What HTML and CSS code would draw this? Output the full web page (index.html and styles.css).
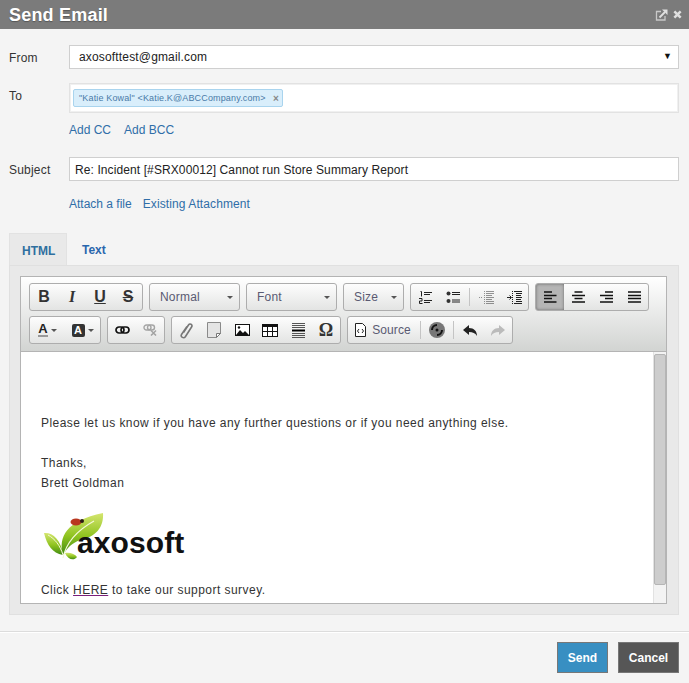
FILE: index.html
```html
<!DOCTYPE html>
<html lang="en">
<head>
<meta charset="utf-8">
<title>Send Email</title>
<link rel="stylesheet" href="styles.css">
</head>
<body>
<svg class="defs" width="0" height="0" aria-hidden="true">
  <defs>
    <linearGradient id="leaf" x1="0" y1="0" x2="0" y2="1">
      <stop offset="0" stop-color="#d5e670"/>
      <stop offset="0.55" stop-color="#8fc31f"/>
      <stop offset="1" stop-color="#3f8a12"/>
    </linearGradient>
  </defs>
</svg>
<div class="dialog">
  <header class="titlebar">
    <h1 class="title">Send Email</h1>
    <div class="title-icons">
      <svg width="13" height="12" viewBox="0 0 13 12"><path d="M6 2.500H1.500v8.500h8.500V7" fill="none" stroke="#c9c9c9" stroke-width="1.300"/><path d="M4.500 8.500 10 3" stroke="#e0e0e0" stroke-width="1.800"/><path d="M7 .5h5.500V6z" fill="#e0e0e0"/></svg>
      <svg width="9" height="9" viewBox="0 0 10 10"><path d="M1.500 1.500l7 7M8.500 1.500l-7 7" stroke="#e0e0e0" stroke-width="2.800"/></svg>
    </div>
  </header>

  <main class="form">
    <div class="row row-from">
      <label class="label label-low">From</label>
      <div class="field field-select"><span>axosofttest@gmail.com</span><span class="caret">▼</span></div>
    </div>
    <div class="row row-to">
      <label class="label label-low">To</label>
      <div class="field-to"><span class="chip"><span>"Katie Kowal" &lt;Katie.K@ABCCompany.com&gt;</span><span class="chip-x">×</span></span></div>
    </div>
    <div class="row row-links-a">
      <span></span>
      <div class="links"><a class="link">Add CC</a><a class="link">Add BCC</a></div>
    </div>
    <div class="row row-subject">
      <label class="label label-low">Subject</label>
      <div class="field field-subject">Re: Incident [#SRX00012] Cannot run Store Summary Report</div>
    </div>
    <div class="row row-links-b">
      <span></span>
      <div class="links"><a class="link">Attach a file</a><a class="link">Existing Attachment</a></div>
    </div>

    <div class="tabs">
      <div class="tab tab-active">HTML</div>
      <div class="tab">Text</div>
    </div>
    <section class="panel">
      <div class="editor">
        <div class="toolbar">
          <div class="tb-row">
            <div class="group">
              <button class="btn glyph g-b">B</button>
              <button class="btn glyph g-i">I</button>
              <button class="btn glyph g-u">U</button>
              <button class="btn glyph g-s">S</button>
            </div>
            <div class="group combo combo-wide"><span>Normal</span><i class="tri"></i></div>
            <div class="group combo combo-wide"><span>Font</span><i class="tri"></i></div>
            <div class="group combo combo-size"><span>Size</span><i class="tri"></i></div>
            <div class="group">
              <button class="btn"><svg width="13" height="13" viewBox="0 0 13 13"><path d="M5 1.500h8M5 3.500h6M5 9.500h8M5 11.500h6" stroke="#222"/><path d="M1.500 .5h1v5M0 7.500h3v2.500H.5v2.500H3.500" fill="none" stroke="#222"/></svg></button>
              <button class="btn"><svg width="14" height="13" viewBox="0 0 14 13"><circle cx="2.500" cy="2.500" r="2" fill="#333"/><circle cx="2.500" cy="10" r="2" fill="#333"/><path d="M6 1.500h8M6 3.500h8M6 9h8M6 11h8" stroke="#222"/></svg></button>
              <i class="sep"></i>
              <button class="btn"><svg width="15" height="13" viewBox="0 0 15 13" opacity=".5"><path d="M7 .5h8M7 2.500h8M7 4.500h6M7 6.500h8M7 8.500h6M7 10.500h8M7 12.500h8" stroke="#333"/><path d="M5.500 0v13" stroke="#333" stroke-dasharray="1 1"/><path d="M0 6.500h4" stroke="#333" stroke-dasharray="1 1"/></svg></button>
              <button class="btn"><svg width="15" height="13" viewBox="0 0 15 13"><path d="M7 .5h8M9 2.500h6M9 4.500h5M9 6.500h6M9 8.500h5M9 10.500h6M7 12.500h8" stroke="#222"/><path d="M5.500 0v13" stroke="#222" stroke-dasharray="1 1"/><path d="M0 6.500h4M2.500 4.500l2 2-2 2" fill="none" stroke="#222"/></svg></button>
            </div>
            <div class="group">
              <button class="btn btn-on"><svg width="13" height="12" viewBox="0 0 13 12"><path d="M0 1h8M0 4.500h12.500M0 7.500h8M0 11h12.500" stroke="#111" stroke-width="1.500"/></svg></button>
              <button class="btn"><svg width="13" height="12" viewBox="0 0 13 12"><path d="M2.500 1h8M0 4.500h13M2.500 7.500h8M0 11h13" stroke="#111" stroke-width="1.500"/></svg></button>
              <button class="btn"><svg width="13" height="12" viewBox="0 0 13 12"><path d="M5 1h8M0 4.500h13M5 7.500h8M0 11h13" stroke="#111" stroke-width="1.500"/></svg></button>
              <button class="btn"><svg width="13" height="12" viewBox="0 0 13 12"><path d="M0 1h13M0 4.500h13M0 7.500h13M0 11h13" stroke="#111" stroke-width="1.500"/></svg></button>
            </div>
          </div>
          <div class="tb-row">
            <div class="group">
              <button class="btn btn-color"><span class="color-a">A</span><i class="tri tri-small"></i></button>
              <button class="btn btn-color"><span class="color-box">A</span><i class="tri tri-small"></i></button>
            </div>
            <div class="group">
              <button class="btn"><svg width="15" height="8" viewBox="0 0 15 8"><rect x="1" y="1" width="8" height="6" rx="3" fill="none" stroke="#111" stroke-width="1.700"/><rect x="6" y="1" width="8" height="6" rx="3" fill="none" stroke="#111" stroke-width="1.700"/></svg></button>
              <button class="btn"><svg width="14" height="12" viewBox="0 0 14 12" opacity=".4"><rect x="1" y="1" width="7" height="5" rx="2.500" fill="none" stroke="#333" stroke-width="1.400"/><rect x="4.500" y="1" width="7" height="5" rx="2.500" fill="none" stroke="#333" stroke-width="1.400"/><path d="M8 6.500l5 5M13 6.500l-5 5" stroke="#333" stroke-width="1.500"/></svg></button>
            </div>
            <div class="group">
              <button class="btn"><svg width="13" height="17" viewBox="0 0 13 17"><path d="M3.500 10.500 8.500 3c1.300-2 4.300-.5 3.200 1.800L5.500 14.500c-1.700 2.500-5.300.5-4-2L7 4.500" fill="none" stroke="#777" stroke-width="1.600"/></svg></button>
              <button class="btn"><svg width="14" height="16" viewBox="0 0 14 16"><path d="M.5.500h13v11l-4 4H.500z" fill="#e4e4e4" stroke="#8a8a8a"/><path d="M9.500 15.500v-4h4z" fill="#fff" stroke="#777"/></svg></button>
              <button class="btn"><svg width="15" height="12" viewBox="0 0 15 12"><rect x=".5" y=".5" width="14" height="11" fill="#fff" stroke="#111"/><path d="M1 11l4-5 3 3 2-2 4 4z" fill="#111"/><circle cx="4" cy="3.500" r="1.200" fill="#111"/></svg></button>
              <button class="btn"><svg width="16" height="13" viewBox="0 0 16 13"><rect x=".5" y=".5" width="15" height="12" fill="#fff" stroke="#111"/><path d="M1 2h14" stroke="#111" stroke-width="2"/><path d="M.5 7.500h15M5.500 3v9M10.500 3v9" stroke="#111"/></svg></button>
              <button class="btn"><svg width="13" height="15" viewBox="0 0 13 15"><path d="M0 .5h13M0 2.500h13M0 4.500h13M0 10.500h13M0 12.500h13M0 14.500h13" stroke="#555"/><path d="M0 7.500h13" stroke="#000" stroke-width="2"/></svg></button>
              <button class="btn glyph g-omega">Ω</button>
            </div>
            <div class="group">
              <button class="btn btn-source"><svg width="11" height="14" viewBox="0 0 11 14"><path d="M.5.500h7l3 3v10H.500z" fill="#fff" stroke="#222"/><path d="M4 6 2.500 8 4 10M7 6l1.500 2L7 10" fill="none" stroke="#222"/></svg><span>Source</span></button>
              <i class="sep"></i>
              <button class="btn"><svg width="16" height="16" viewBox="0 0 16 16"><circle cx="8" cy="8" r="8" fill="#777"/><path d="M8 3a5 5 0 0 0-5 5M8 13a5 5 0 0 0 5-5" fill="none" stroke="#111" stroke-width="2"/><circle cx="8" cy="8" r="1.500" fill="#111"/></svg></button>
              <i class="sep"></i>
              <button class="btn"><svg width="14" height="11" viewBox="0 0 14 11"><path d="M6 0v3c5 0 8 3 8 8-2-3-4-4-8-4v3L0 5z" fill="#222"/></svg></button>
              <button class="btn"><svg width="14" height="11" viewBox="0 0 14 11"><path d="M8 0v3C3 3 0 6 0 11c2-3 4-4 8-4v3l6-5z" fill="#bbb"/></svg></button>
            </div>
          </div>
        </div>
        <div class="content-wrap">
          <article class="content">
            <p class="para">Please let us know if you have any further questions or if you need anything else.</p>
            <p class="para">Thanks,<br>Brett Goldman</p>
            <div class="logo">
              <svg class="logo-leaf" width="64" height="48" viewBox="0 0 64 48">
                <path d="M19 42C14 24 22 8 59 0 60 14 52 24 36 27 28 30 23 35 19 42z" fill="url(#leaf)"/>
                <path d="M0 20C8 19 17 26 19 42 8 40 3 32 0 20z" fill="url(#leaf)"/>
                <path d="M21 40C26 39 31 41 33 44 30 48 24 47 21 40z" fill="url(#leaf)"/>
                <path d="M19 45C22 30 32 18 50 8" fill="none" stroke="#f4f8d8" stroke-width="1.200"/>
                <path d="M4 22C11 26 16 32 19 42" fill="none" stroke="#f4f8d8"/>
                <ellipse cx="32" cy="9" rx="5.500" ry="3.500" fill="#b9371f"/>
                <circle cx="38" cy="8" r="2" fill="#2c1a14"/>
              </svg>
              <span class="logo-text">axosoft</span>
            </div>
            <p class="para para-last">Click <a class="here">HERE</a> to take our support survey.</p>
          </article>
          <div class="scrollbar"><div class="thumb"></div></div>
        </div>
      </div>
    </section>
  </main>

  <footer class="footer">
    <button class="action action-send">Send</button>
    <button class="action action-cancel">Cancel</button>
  </footer>
</div>
</body>
</html>
```
FILE: styles.css
```css
* { box-sizing: border-box; }
html, body { margin: 0; padding: 0; }
body {
  width: 689px;
  height: 683px;
  overflow: hidden;
  background: #f4f4f4;
  font-family: "Liberation Sans", Arial, sans-serif;
  font-size: 12px;
  color: #333;
}
.defs { display: block; height: 0; }
.dialog { display: flex; flex-direction: column; height: 683px; }

.titlebar {
  height: 29px;
  flex: none;
  background: #7b7b7b;
  display: flex;
  align-items: center;
  justify-content: space-between;
  padding: 0 7px 0 9px;
}
.title {
  margin: 0;
  font-size: 18px;
  font-weight: 700;
  color: #fff;
  letter-spacing: .2px;
  text-shadow: 0 1px 1px rgba(0,0,0,.3);
  line-height: 26px;
}
.title-icons { display: flex; align-items: center; gap: 5px; }

.form { padding: 16px 10px 0 9px; flex: none; }
.row { display: grid; grid-template-columns: 60px 1fr; }
.label { height: 24px; font-size: 12px; color: #333; line-height: 24px; letter-spacing: .2px; }
.label-low { padding-top: 1px; }
.field {
  height: 24px;
  background: #fff;
  border: 1px solid #cfcfcf;
  display: flex;
  align-items: center;
  color: #222;
}
.field-select {
  justify-content: space-between;
  padding: 0 6px 0 9px;
  letter-spacing: .16px;
}
.caret { font-size: 9px; color: #111; margin-top: -2px; }
.row-to { margin-top: 14px; }
.field-to {
  height: 30px;
  background: #fff;
  border: 1px solid #e2e2e2;
  box-shadow: inset 0 0 0 1px #f0f0f0;
  padding: 5px 3px;
}
.chip {
  display: inline-flex;
  align-items: center;
  justify-content: space-between;
  width: 210px;
  height: 18px;
  padding: 0 3px 0 5px;
  background: #d9eefb;
  border: 1px solid #a9d4ee;
  border-radius: 2px;
  font-size: 9px;
  letter-spacing: .15px;
  color: #4a7ba8;
}
.chip-x { color: #888; font-size: 10px; font-weight: 700; }
.row-links-a { margin-top: 9px; }
.row-subject { margin-top: 19px; }
.field-subject { padding: 2px 5px 0; color: #222; letter-spacing: .1px; }
.row-links-b { margin-top: 15px; }
.links { display: flex; height: 16px; align-items: center; }
.row-links-a .links { gap: 13px; }
.row-links-b .links { gap: 11px; }
.link { color: #2f6ea8; }
.row-links-b .link + .link { letter-spacing: .1px; }

.tabs { display: flex; margin-top: 21px; height: 32px; }
.tab {
  padding: 0 15px 0 12px;
  font-weight: 700;
  color: #2a66ad;
  line-height: 34px;
}
.tab-active {
  width: 58px;
  background: #e9e9e9;
  border: 1px solid #e2e2e2;
  border-bottom: 0;
  color: #2f6f9f;
}
.tab + .tab { padding-left: 15px; }

.panel {
  height: 350px;
  background: #e9e9e9;
  border: 1px solid #e0e0e0;
  padding: 10px 11px 11px 10px;
}
.editor {
  height: 328px;
  border: 1px solid #b4b4b4;
  background: #fff;
  display: flex;
  flex-direction: column;
}
.toolbar {
  height: 75px;
  flex: none;
  padding: 6px 0 0 8px;
  background: linear-gradient(#ffffff, #d2d4d2);
  border-bottom: 1px solid #b4b4b4;
  display: flex;
  flex-direction: column;
  gap: 5px;
}
.tb-row { display: flex; gap: 6px; }
.group {
  height: 28px;
  display: flex;
  align-items: center;
  border: 1px solid #adadad;
  border-radius: 3px;
  background: linear-gradient(#fdfdfd, #e3e4e3);
}
.btn {
  width: 28px;
  height: 26px;
  padding: 0;
  border: 0;
  background: none;
  display: flex;
  align-items: center;
  justify-content: center;
  font-family: "Liberation Sans", Arial, sans-serif;
  color: #333;
}
.btn-on {
  background: #b5b5b5;
  box-shadow: inset 0 0 3px #666;
  border-radius: 2px 0 0 2px;
}
.glyph { font-size: 16px; line-height: 1; }
.g-b { font-weight: 700; }
.g-i { font-family: "Liberation Serif", serif; font-style: italic; font-weight: 700; }
.g-u { font-weight: 700; text-decoration: underline; }
.g-s { font-weight: 700; text-decoration: line-through; }
.g-omega { font-family: "Liberation Serif", serif; font-weight: 700; font-size: 18px; }
.combo {
  justify-content: space-between;
  padding: 0 6px 0 10px;
  color: #5a5a72;
  letter-spacing: .2px;
}
.combo-wide { width: 91px; }
.combo-size { width: 61px; }
.tri {
  width: 0;
  height: 0;
  border: 3px solid transparent;
  border-top-color: #555;
  border-bottom: 0;
}
.tri-small { margin-left: 3px; }
.sep { width: 1px; height: 18px; margin: 0 2px; background: #c4c4c4; }
.btn-color { width: 35px; }
.color-a {
  font-weight: 700;
  font-size: 13px;
  line-height: 12px;
  border-bottom: 2px solid #999;
  color: #222;
}
.color-box {
  width: 13px;
  height: 13px;
  background: #333;
  border-radius: 2px;
  color: #fff;
  font-size: 11px;
  font-weight: 700;
  line-height: 13px;
  text-align: center;
}
.btn-source {
  width: 70px;
  gap: 6px;
  font-size: 12px;
  color: #5a5a72;
  letter-spacing: .1px;
}
.btn-source span { line-height: 14px; }

.content-wrap { flex: 1; display: flex; min-height: 0; }
.content {
  flex: 1;
  padding: 61px 10px 0 20px;
  overflow: hidden;
  letter-spacing: .455px;
  line-height: 20px;
  color: #333;
}
.para { margin: 0; }
.para + .para { margin-top: 20px; }
.logo {
  display: flex;
  align-items: flex-end;
  height: 48px;
  margin: 20px 0 0 3px;
  letter-spacing: 0;
}
.logo-leaf { flex: none; }
.logo-text {
  margin: 0 0 0 -31px;
  font-size: 30px;
  font-weight: 700;
  letter-spacing: .1px;
  color: #111;
  line-height: 36px;
}
.logo + .para-last { margin-top: 19px; }
.here { color: #333; text-decoration: underline; text-decoration-color: #7b1f7b; }
.scrollbar {
  width: 13px;
  flex: none;
  background: #f3f3f3;
  border-left: 1px solid #e2e2e2;
  padding: 2px 0 0 0;
}
.thumb {
  height: 231px;
  background: #cdcdcd;
  border: 1px solid #b5b5b5;
  border-radius: 2px;
}

.footer {
  margin-top: 16px;
  border-top: 1px solid #dcdcdc;
  box-shadow: inset 0 1px 0 #fff;
  display: flex;
  justify-content: flex-end;
  gap: 10px;
  padding: 10px 10px 0 0;
  flex: 1;
}
.action {
  height: 31px;
  border: 1px solid #777;
  color: #fff;
  font-family: "Liberation Sans", Arial, sans-serif;
  font-size: 12px;
  font-weight: 700;
  padding: 0;
}
.action-send { width: 51px; background: #388fc2; }
.action-cancel { width: 61px; background: #565656; }
```
